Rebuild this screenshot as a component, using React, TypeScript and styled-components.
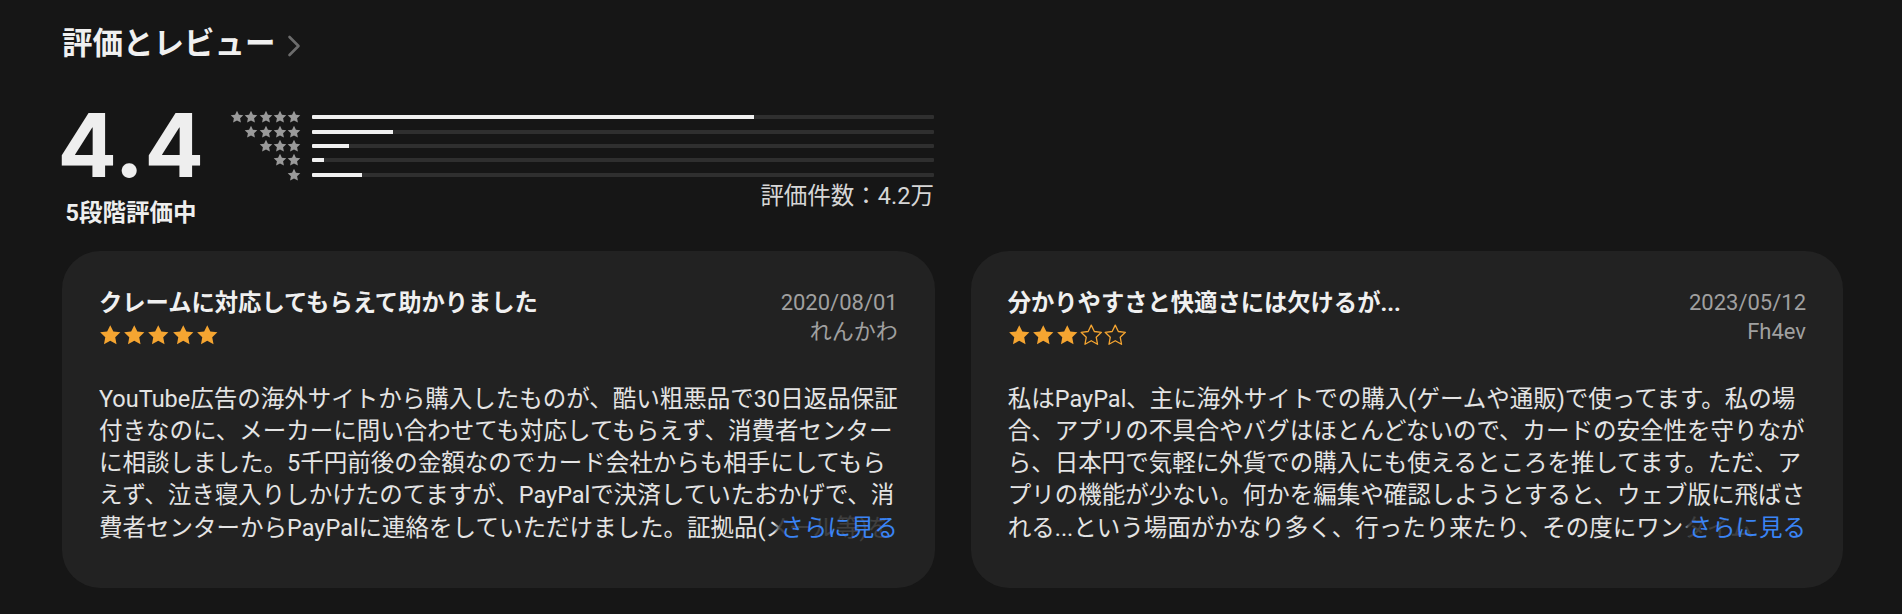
import React, { FC } from "react";
import styled, { createGlobalStyle } from "styled-components";

const GlobalStyle = createGlobalStyle`
  html, body {
    margin: 0;
    padding: 0;
    background: #161616;
  }
  body {
    font-family: "Roboto", "Noto Sans CJK JP", sans-serif;
    color: #efefef;
  }
`;

type Review = {
    title: string
    date: string
    author: string
    rating: number
    lines: string[]
};

const reviews: Review[] = [
    {
        title: "クレームに対応してもらえて助かりました",
        date: "2020/08/01",
        author: "れんかわ",
        rating: 5,
        lines: [
            "YouTube広告の海外サイトから購入したものが、酷い粗悪品で30日返品保証",
            "付きなのに、メーカーに問い合わせても対応してもらえず、消費者センター",
            "に相談しました。5千円前後の金額なのでカード会社からも相手にしてもら",
            "えず、泣き寝入りしかけたのてますが、PayPalで決済していたおかげで、消",
            "費者センターからPayPalに連絡をしていただけました。証拠品(メール等)を",
        ],
    },
    {
        title: "分かりやすさと快適さには欠けるが...",
        date: "2023/05/12",
        author: "Fh4ev",
        rating: 3,
        lines: [
            "私はPayPal、主に海外サイトでの購入(ゲームや通販)で使ってます。私の場",
            "合、アプリの不具合やバグはほとんどないので、カードの安全性を守りなが",
            "ら、日本円で気軽に外貨での購入にも使えるところを推してます。ただ、ア",
            "プリの機能が少ない。何かを編集や確認しようとすると、ウェブ版に飛ばさ",
            "れる...という場面がかなり多く、行ったり来たり、その度にワンタイム",
        ],
    },
];

const histogram = [71, 13, 6, 2, 8];

const STAR = "12,1.2 15.3,8 22.8,8.9 17.3,14.1 18.7,21.6 12,17.9 5.3,21.6 6.7,14.1 1.2,8.9 8.7,8";

const Star: FC<{ size: number; color: string; outline?: boolean }> = ({ size, color, outline }) => (
    <svg width={size} height={size} viewBox="0 0 24 24">
        <polygon
            points={STAR}
            fill={outline ? "none" : color}
            stroke={color}
            strokeWidth={outline ? 1.4 : 0}
            strokeLinejoin="round"
        />
    </svg>
);

export default function App() {
    return (
        <>
            <GlobalStyle/>
            <Page>
                <Heading>
                    評価とレビュー
                    <svg width="14" height="22" viewBox="0 0 14 22">
                        <path d="M2.5 2 L11.5 11 L2.5 20" fill="none" stroke="#6c6c6c" strokeWidth="2.6"
                              strokeLinecap="round" strokeLinejoin="round"/>
                    </svg>
                </Heading>

                <Summary>
                    <ScoreBlock>
                        <Score>4.4</Score>
                        <OutOf>5段階評価中</OutOf>
                    </ScoreBlock>
                    <Histogram>
                        {histogram.map((pct, i) => (
                            <HistRow key={i}>
                                <HistStars>
                                    {Array.from({length: 5 - i}).map((_, j) => (
                                        <Star key={j} size={14} color="#9a9a9a"/>
                                    ))}
                                </HistStars>
                                <Track>
                                    <Fill style={{width: `${pct}%`}}/>
                                </Track>
                            </HistRow>
                        ))}
                        <Count>評価件数：4.2万</Count>
                    </Histogram>
                </Summary>

                <Cards>
                    {reviews.map((r) => (
                        <Card key={r.date}>
                            <CardHead>
                                <div>
                                    <Title>{r.title}</Title>
                                    <Rating>
                                        {Array.from({length: 5}).map((_, j) => (
                                            <Star key={j} size={22.5} color="#f5a531" outline={j >= r.rating}/>
                                        ))}
                                    </Rating>
                                </div>
                                <Meta>
                                    <MetaLine>{r.date}</MetaLine>
                                    <MetaLine>{r.author}</MetaLine>
                                </Meta>
                            </CardHead>
                            <Body>
                                {r.lines.map((line, k) => (
                                    <Line key={k}>{line}</Line>
                                ))}
                                <More>さらに見る</More>
                            </Body>
                        </Card>
                    ))}
                </Cards>
            </Page>
        </>
    );
}

const Page = styled.div`
  padding: 26px 59px 0 62px;
`;

const Heading = styled.h2`
  margin: 0;
  display: flex;
  align-items: center;
  gap: 11px;
  font-size: 30.5px;
  line-height: 36px;
  font-weight: 700;
  color: #f0f0f0;

  svg {
    margin-top: 4px;
  }
`;

const Summary = styled.div`
  display: flex;
  align-items: flex-start;
  margin-top: 39px;
`;

const ScoreBlock = styled.div`
  width: 138px;
  display: flex;
  flex-direction: column;
  align-items: center;
`;

const Score = styled.div`
  font-family: "Inter", "Roboto", sans-serif;
  font-size: 88px;
  line-height: 88px;
  font-weight: 700;
  color: #eeeeee;
  letter-spacing: 0.5px;
`;

const OutOf = styled.div`
  margin-top: 10px;
  font-size: 23.5px;
  line-height: 28px;
  font-weight: 700;
  color: #eeeeee;
`;

const Histogram = styled.div`
  margin-top: 9px;
  margin-left: 30px;
  width: 704px;
  display: flex;
  flex-direction: column;
`;

const HistRow = styled.div`
  height: 14.35px;
  display: flex;
  align-items: center;
`;

const HistStars = styled.div`
  width: 71px;
  display: flex;
  justify-content: flex-end;
  gap: 0.2px;

  svg {
    display: block;
  }
`;

const Track = styled.div`
  margin-left: 11px;
  flex: 1;
  height: 4px;
  background: #2f2f2f;
  border-radius: 1px;
  overflow: hidden;
`;

const Fill = styled.div`
  height: 100%;
  background: #f0f0f0;
`;

const Count = styled.div`
  text-align: right;
  font-size: 23.5px;
  line-height: 28px;
  color: #d6d6d6;
`;

const Cards = styled.div`
  margin-top: 24px;
  display: grid;
  grid-template-columns: 1fr 1fr;
  gap: 36px;
`;

const Card = styled.div`
  background: #222222;
  border-radius: 38px;
  padding: 37px 37px 44px;
`;

const CardHead = styled.div`
  display: flex;
  justify-content: space-between;
  align-items: flex-start;
`;

const Title = styled.div`
  font-size: 23.3px;
  line-height: 30px;
  font-weight: 700;
  color: #f0f0f0;
`;

const Rating = styled.div`
  margin-top: 6px;
  display: flex;
  gap: 1.7px;

  svg {
    display: block;
  }
`;

const Meta = styled.div`
  text-align: right;
  color: #a0a0a0;
`;

const MetaLine = styled.div`
  font-size: 22px;
  line-height: 29px;
`;

const Body = styled.div`
  position: relative;
  margin-top: 36px;
  font-size: 23.5px;
  line-height: 32.3px;
  color: #e4e4e4;
`;

const Line = styled.div`
  white-space: nowrap;
  overflow: hidden;
`;

const More = styled.span`
  position: absolute;
  right: 0;
  bottom: 0;
  padding-left: 6px;
  color: #3a84f5;
  background: linear-gradient(to right, rgba(34, 34, 34, 0), rgba(34, 34, 34, 0.85) 6px);
`;
